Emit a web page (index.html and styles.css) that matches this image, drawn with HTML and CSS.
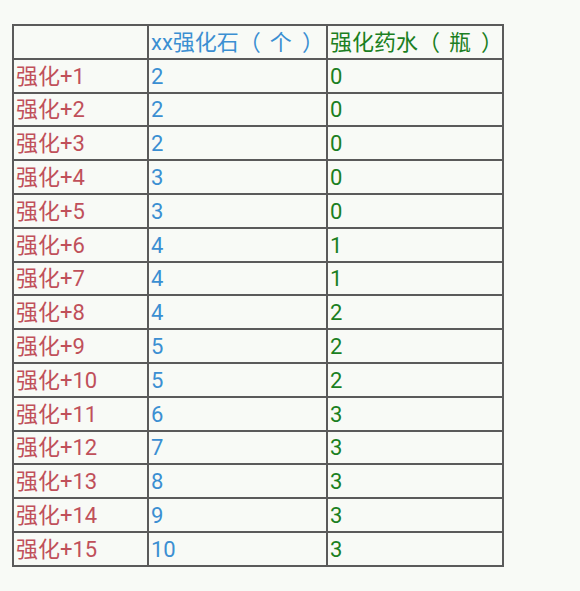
FILE: index.html
```html
<!DOCTYPE html>
<html>
<head>
<meta charset="utf-8">
<link rel="stylesheet" href="styles.css">
</head>
<body>
<table class="tbl">
  <tr class="head"><td></td><td class="c2">xx强化石<span class="po">（</span>个<span class="pc">）</span></td><td class="c3">强化药水<span class="po">（</span>瓶<span class="pc">）</span></td></tr>
  <tr><td class="c1">强化+1</td><td class="c2">2</td><td class="c3">0</td></tr>
  <tr><td class="c1">强化+2</td><td class="c2">2</td><td class="c3">0</td></tr>
  <tr><td class="c1">强化+3</td><td class="c2">2</td><td class="c3">0</td></tr>
  <tr><td class="c1">强化+4</td><td class="c2">3</td><td class="c3">0</td></tr>
  <tr><td class="c1">强化+5</td><td class="c2">3</td><td class="c3">0</td></tr>
  <tr><td class="c1">强化+6</td><td class="c2">4</td><td class="c3">1</td></tr>
  <tr><td class="c1">强化+7</td><td class="c2">4</td><td class="c3">1</td></tr>
  <tr><td class="c1">强化+8</td><td class="c2">4</td><td class="c3">2</td></tr>
  <tr><td class="c1">强化+9</td><td class="c2">5</td><td class="c3">2</td></tr>
  <tr><td class="c1">强化+10</td><td class="c2">5</td><td class="c3">2</td></tr>
  <tr><td class="c1">强化+11</td><td class="c2">6</td><td class="c3">3</td></tr>
  <tr><td class="c1">强化+12</td><td class="c2">7</td><td class="c3">3</td></tr>
  <tr><td class="c1">强化+13</td><td class="c2">8</td><td class="c3">3</td></tr>
  <tr><td class="c1">强化+14</td><td class="c2">9</td><td class="c3">3</td></tr>
  <tr><td class="c1">强化+15</td><td class="c2">10</td><td class="c3">3</td></tr>
</table>
</body>
</html>
```
FILE: styles.css
```css
html, body {
  margin: 0;
  padding: 0;
  background: #f8faf6;
}
body {
  padding: 24px 0 0 12px;
  font-family: Roboto, "Noto Sans CJK SC", sans-serif;
}
.tbl {
  border-collapse: collapse;
  width: 492px;
  table-layout: fixed;
}
.tbl td {
  border: 2px solid #5a5a5a;
  height: 29.8px;
  padding: 2px 2px 0;
  font-size: 22px;
  line-height: 1;
  vertical-align: middle;
  white-space: nowrap;
}
.tbl td:nth-child(1) { width: 129px; }
.tbl td:nth-child(2) { width: 173px; }
.po { margin-right: 9px; }
.pc { margin-left: 10px; }
.c1 { color: #c0505a; }
.c2 { color: #3b8fd2; }
.c3 { color: #1b7f22; }
```
